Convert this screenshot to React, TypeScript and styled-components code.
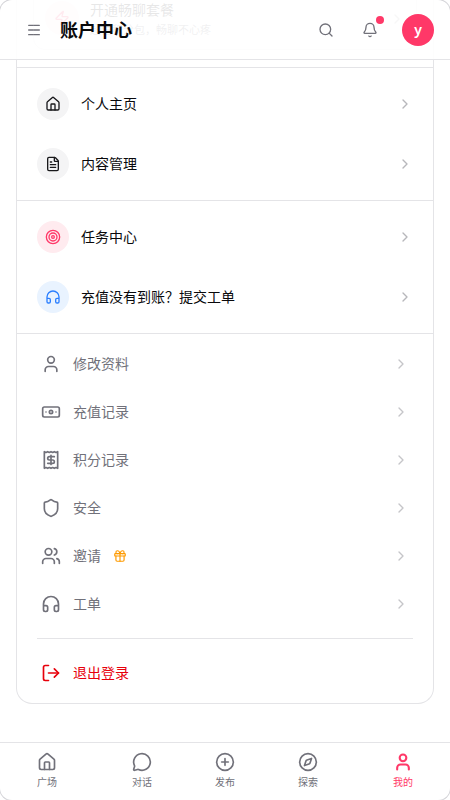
import React from "react";
import styled, { createGlobalStyle } from "styled-components";
import {
  Banknote, Bell, ChevronRight, CirclePlus, Compass, FileText, Gift, Headphones, House,
  LogOut, Menu, MessageCircle, Receipt, Search, Shield, Target, User, Users, Zap,
} from "lucide-react";
import type { LucideIcon } from "lucide-react";

const Global = createGlobalStyle`
  * { box-sizing: border-box; }
  body {
    margin: 0;
    background: #fff;
    color: #09090b;
    font-family: "Noto Sans", "Noto Sans CJK SC", sans-serif;
  }
`;

const Frame = styled.div`
  position: relative;
  width: 450px;
  height: 800px;
  display: flex;
  flex-direction: column;
  overflow: hidden;
  background: #fff;
  border-radius: 12px;
  box-shadow: 0 0 0 1px #d4d4d8;
`;

const Header = styled.header`
  position: relative;
  height: 60px;
  flex: none;
  display: flex;
  align-items: center;
  padding: 0 16px 0 26px;
  border-bottom: 1px solid #e4e4e7;
  color: #71717a;
`;

/* Content scrolled underneath the translucent header. */
const Ghost = styled.div`
  position: absolute;
  inset: 0 16px 0;
  overflow: hidden;
  opacity: 0.1;
  color: #18181b;
  border: solid #e4e4e7;
  border-width: 0 1px;
`;
const GhostCard = styled.div`
  position: absolute;
  inset: -20px 16px 9px;
  border: 1px solid #e4e4e7;
  border-radius: 12px;
`;
const GhostCircle = styled.div`
  position: absolute;
  left: 28px;
  top: 1px;
  width: 34px;
  height: 34px;
  display: grid;
  place-items: center;
  border-radius: 50%;
  background: #ffe4ea;
  color: #ff3868;
`;
const GhostLine = styled.div<{ $small?: boolean }>`
  position: absolute;
  left: 73px;
  top: ${(p) => (p.$small ? 22 : 0)}px;
  font-size: ${(p) => (p.$small ? 11 : 14)}px;
  line-height: ${(p) => (p.$small ? 16 : 20)}px;
  color: ${(p) => (p.$small ? "#71717a" : "#18181b")};
  white-space: nowrap;
`;
const GhostChevron = styled.div`
  position: absolute;
  right: 28px;
  top: 11px;
  display: flex;
  opacity: 0.35;
`;

const Title = styled.h1`
  position: relative;
  flex: 1;
  margin: 0 0 0 18px;
  font-size: 18px;
  line-height: 28px;
  font-weight: 700;
  color: #09090b;
`;
const BellWrap = styled.div`
  position: relative;
  display: flex;
  margin: 0 24px 0 28px;
`;
const Dot = styled.span`
  position: absolute;
  top: -6px;
  right: -6px;
  width: 8px;
  height: 8px;
  border-radius: 50%;
  background: #ff3868;
`;
const Avatar = styled.div`
  position: relative;
  width: 32px;
  height: 32px;
  display: grid;
  place-items: center;
  border-radius: 50%;
  background: #ff3868;
  color: #fff;
  font-size: 14px;
  line-height: 20px;
  font-weight: 600;
`;

const Main = styled.main`
  flex: 1;
  min-height: 0;
  padding: 0 16px;
`;
const Card = styled.div`
  height: 644px;
  border: 1px solid #e4e4e7;
  border-top: 0;
  border-radius: 0 0 16px 16px;
  padding-top: 7px;
`;
const Section = styled.section`
  height: 133px;
  border-top: 1px solid #e4e4e7;
  padding: 6px 20px;
`;
const FeatureRow = styled.div`
  height: 60px;
  display: flex;
  align-items: center;
  gap: 12px;
`;
const Badge = styled.span<{ $bg: string; $fg: string }>`
  width: 32px;
  height: 32px;
  display: grid;
  place-items: center;
  border-radius: 50%;
  background: ${(p) => p.$bg};
  color: ${(p) => p.$fg};
`;
const Label = styled.span`
  flex: 1;
  display: flex;
  align-items: center;
  gap: 12px;
  font-size: 14px;
  line-height: 20px;
`;
const Chevron = styled(ChevronRight)<{ $faint?: boolean }>`
  color: #71717a;
  opacity: ${(p) => (p.$faint ? 0.4 : 0.5)};
`;
const Settings = styled.section`
  border-top: 1px solid #e4e4e7;
  padding: 6px 20px 0;
`;
const SettingRow = styled.div<{ $danger?: boolean }>`
  height: 48px;
  display: flex;
  align-items: center;
  gap: 12px;
  padding: 0 4px;
  color: ${(p) => (p.$danger ? "#e7000b" : "#71717a")};
`;
const Divider = styled.hr`
  height: 1px;
  margin: 10px 0;
  border: 0;
  background: #e4e4e7;
`;
const GiftIcon = styled(Gift)`
  color: #fe9a00;
`;

const TabBar = styled.nav`
  height: 58px;
  flex: none;
  display: grid;
  grid-template-columns: 94px 96px 70px 96px 94px;
  padding-top: 9px;
  border-top: 1px solid #e4e4e7;
`;
const Tab = styled.div<{ $active?: boolean }>`
  display: flex;
  flex-direction: column;
  align-items: center;
  gap: 3px;
  font-size: 10px;
  line-height: 15px;
  white-space: nowrap;
  color: ${(p) => (p.$active ? "#ff3868" : "#71717a")};
`;

type Feature = { icon: LucideIcon; label: string; bg: string; fg: string };
const features: Feature[][] = [
  [
    { icon: House, label: "个人主页", bg: "#f4f4f5", fg: "#18181b" },
    { icon: FileText, label: "内容管理", bg: "#f4f4f5", fg: "#18181b" },
  ],
  [
    { icon: Target, label: "任务中心", bg: "#ffebef", fg: "#ff3868" },
    { icon: Headphones, label: "充值没有到账？提交工单", bg: "#e9f3ff", fg: "#2b7fff" },
  ],
];
const settings: { icon: LucideIcon; label: string; gift?: boolean }[] = [
  { icon: User, label: "修改资料" },
  { icon: Banknote, label: "充值记录" },
  { icon: Receipt, label: "积分记录" },
  { icon: Shield, label: "安全" },
  { icon: Users, label: "邀请", gift: true },
  { icon: Headphones, label: "工单" },
];
const tabs: { icon: LucideIcon; label: string; active?: boolean }[] = [
  { icon: House, label: "广场" },
  { icon: MessageCircle, label: "对话" },
  { icon: CirclePlus, label: "发布" },
  { icon: Compass, label: "探索" },
  { icon: User, label: "我的", active: true },
];

export default function App() {
  return (
    <>
      <Global />
      <Frame>
        <Header>
          <Ghost>
            <GhostCard />
            <GhostCircle><Zap size={16} /></GhostCircle>
            <GhostLine>开通畅聊套餐</GhostLine>
            <GhostLine $small>超值积分包，畅聊不心疼</GhostLine>
            <GhostChevron><ChevronRight size={16} /></GhostChevron>
          </Ghost>
          <Menu size={16} />
          <Title>账户中心</Title>
          <Search size={16} />
          <BellWrap><Bell size={16} /><Dot /></BellWrap>
          <Avatar>y</Avatar>
        </Header>
        <Main>
          <Card>
            {features.map((group, i) => (
              <Section key={i}>
                {group.map(({ icon: Icon, label, bg, fg }) => (
                  <FeatureRow key={label}>
                    <Badge $bg={bg} $fg={fg}><Icon size={16} /></Badge>
                    <Label>{label}</Label>
                    <Chevron size={16} />
                  </FeatureRow>
                ))}
              </Section>
            ))}
            <Settings>
              {settings.map(({ icon: Icon, label, gift }) => (
                <SettingRow key={label}>
                  <Icon size={20} />
                  <Label>{label}{gift && <GiftIcon size={14} />}</Label>
                  <Chevron size={16} $faint />
                </SettingRow>
              ))}
              <Divider />
              <SettingRow $danger><LogOut size={20} /><Label>退出登录</Label></SettingRow>
            </Settings>
          </Card>
        </Main>
        <TabBar>
          {tabs.map(({ icon: Icon, label, active }) => (
            <Tab key={label} $active={active}>
              <Icon size={20} strokeWidth={active ? 2.5 : 2} />
              {label}
            </Tab>
          ))}
        </TabBar>
      </Frame>
    </>
  );
}
